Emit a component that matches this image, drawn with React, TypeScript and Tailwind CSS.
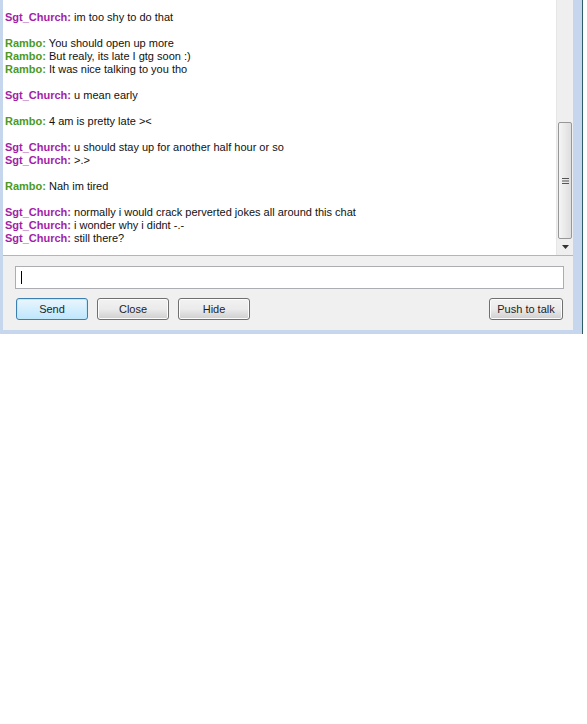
import React from "react";

type Line = { who?: "s" | "r"; text?: string };

const lines: Line[] = [
  { who: "s", text: "im too shy to do that" },
  {},
  { who: "r", text: "You should open up more" },
  { who: "r", text: "But realy, its late I gtg soon :)" },
  { who: "r", text: "It was nice talking to you tho" },
  {},
  { who: "s", text: "u mean early" },
  {},
  { who: "r", text: "4 am is pretty late ><" },
  {},
  { who: "s", text: "u should stay up for another half hour or so" },
  { who: "s", text: ">.>" },
  {},
  { who: "r", text: "Nah im tired" },
  {},
  { who: "s", text: "normally i would crack perverted jokes all around this chat" },
  { who: "s", text: "i wonder why i didnt -.-" },
  { who: "s", text: "still there?" },
];

const Btn = ({ label, focus, wide }: { label: string; focus?: boolean; wide?: boolean }) => (
  <button
    type="button"
    className={
      "h-[22px] rounded-[3px] border text-[11px] leading-none text-[#1e1e1e] " +
      (wide ? "w-[74px] " : "w-[72px] ") +
      (focus
        ? "border-[#3c7fb1] bg-linear-to-b from-[#eaf6fd] to-[#bee6fd] shadow-[inset_0_0_0_1px_#c0e8fb]"
        : "border-[#707070] bg-linear-to-b from-[#f2f2f2] via-[#ebebeb] to-[#cfcfcf] shadow-[inset_0_0_0_1px_#fcfcfc]")
    }
  >
    {label}
  </button>
);

const App = () => {
  return (
    <div className="bg-white min-h-[724px] font-['Liberation_Sans',Tahoma,sans-serif]">
      <div className="flex w-[583px]">
        <div className="w-[3px] bg-[#c6d6ec]" />
        <div className="flex w-[570px] flex-col">
          <div className="flex h-[256px] border-b border-[#a9b8c8]">
            <div className="flex-1 bg-white pt-[11px] pl-[2px] text-[11px] leading-[13px] text-[#111]">
              {lines.map((l, i) =>
                l.who ? (
                  <div key={i} className="whitespace-pre">
                    <span
                      className={
                        "font-bold " +
                        (l.who === "s" ? "text-[#a21ea8]" : "text-[#4a9a24]")
                      }
                    >
                      {l.who === "s" ? "Sgt_Church:" : "Rambo:"}
                    </span>{" "}
                    {l.text}
                  </div>
                ) : (
                  <div key={i} className="h-[13px]" />
                )
              )}
            </div>
            <div className="flex w-[17px] flex-col bg-[#efefef] border-l border-[#e6e6e6]">
              <div className="h-[122px]" />
              <div className="mx-[1px] flex h-[117px] items-center justify-center rounded-[2px] border border-[#979797] bg-linear-to-r from-[#f5f5f5] to-[#dedede]">
                <svg width="7" height="8" viewBox="0 0 7 8">
                  <path d="M0 1.5h7M0 4h7M0 6.5h7" stroke="#555" strokeWidth="1" />
                </svg>
              </div>
              <div className="flex flex-1 items-center justify-center">
                <svg width="7" height="4" viewBox="0 0 7 4">
                  <path d="M0 0h7L3.5 4z" fill="#333" />
                </svg>
              </div>
            </div>
          </div>
          <div className="flex h-[74px] flex-col bg-[#f0f0f0] pl-[12px] pr-[9px] pt-[10px]">
            <div className="flex h-[23px] items-center border border-[#abadb3] bg-white pl-[5px]">
              <div className="h-[13px] w-px bg-black" />
            </div>
            <div className="mt-[9px] flex items-center pl-px pr-px">
              <div className="flex gap-[9px]">
                <Btn label="Send" focus />
                <Btn label="Close" />
                <Btn label="Hide" />
              </div>
              <div className="ml-auto flex">
                <Btn label="Push to talk" wide />
              </div>
            </div>
          </div>
          <div className="h-[4px] bg-[#c6d6ec]" />
        </div>
        <div className="flex w-[10px]">
          <div className="w-[9px] bg-[#c6d6ec]" />
          <div className="w-px bg-[#2e5d6a]" />
        </div>
      </div>
    </div>
  );
};

export default App;
